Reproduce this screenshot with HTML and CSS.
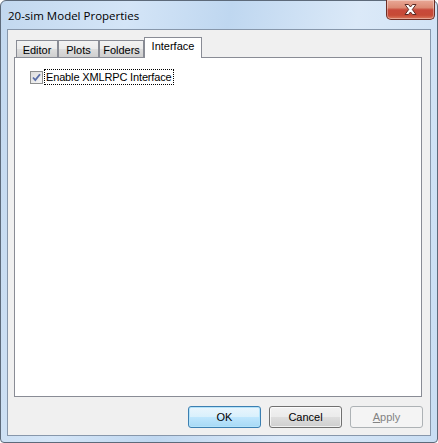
FILE: index.html
```html
<!DOCTYPE html>
<html>
<head>
<meta charset="utf-8">
<link rel="stylesheet" href="styles.css">
</head>
<body>
<div class="window">
  <div class="titlebar">
    <span class="title">20-sim Model Properties</span>
    <div class="close">
      <svg width="15" height="13" viewBox="0 0 15 13">
        <path d="M2 1.5 L5.5 1.5 L7.5 4 L9.5 1.5 L13 1.5 L9.3 6.5 L13 11.5 L9.5 11.5 L7.5 9 L5.5 11.5 L2 11.5 L5.7 6.5 Z" fill="#ffffff" stroke="#5a2a24" stroke-width="1" stroke-linejoin="round"/>
      </svg>
    </div>
  </div>
  <div class="client">
    <div class="tabctl">
      <div class="tabs">
        <div class="tab w-editor">Editor</div>
        <div class="tab w-plots">Plots</div>
        <div class="tab w-folders">Folders</div>
        <div class="tab active w-interface">Interface</div>
      </div>
      <div class="panel">
        <label class="check">
          <span class="box">
            <svg width="11" height="11" viewBox="0 0 11 11">
              <path d="M2 5.5 L4.3 8 L9 2.2" fill="none" stroke="#5a6ea8" stroke-width="1.8"/>
            </svg>
          </span>
          <span class="label">Enable XMLRPC Interface</span>
        </label>
      </div>
    </div>
    <div class="buttons">
      <button class="btn default">OK</button>
      <button class="btn">Cancel</button>
      <button class="btn disabled"><u>A</u>pply</button>
    </div>
  </div>
</div>
</body>
</html>
```

FILE: styles.css
```css
* { box-sizing: border-box; }
html, body { margin: 0; padding: 0; background: #ffffff; }
body { width: 438px; height: 443px; overflow: hidden; }

.window {
  width: 438px;
  height: 443px;
  border: 1px solid #5d6a7a;
  border-radius: 6px 6px 4px 4px;
  background: linear-gradient(100deg, #c2d8ef 0%, #d4e5f7 25%, #bfd7f0 45%, #dbe9f8 70%, #c8ddf3 100%);
  display: flex;
  flex-direction: column;
  font-family: "Liberation Sans", Arial, sans-serif;
  font-size: 11px;
  color: #000;
}

.titlebar {
  height: 28px;
  display: flex;
  align-items: flex-start;
  padding-left: 7px;
  padding-right: 2px;
}
.title {
  font-family: "Open Sans", "Noto Sans", sans-serif;
  font-size: 11.5px;
  line-height: 16px;
  margin-top: 7px;
  color: #000;
}
.close {
  margin-left: auto;
  width: 49px;
  height: 20px;
  margin-top: -1px;
  border: 1px solid #6e2e25;
  border-top: none;
  border-radius: 0 0 5px 5px;
  background: linear-gradient(#e9a897 0%, #dc8a74 40%, #c8493a 52%, #c64a36 80%, #dc7a5e 100%);
  box-shadow: inset 0 0 0 1px rgba(255,255,255,0.35);
  display: flex;
  align-items: center;
  justify-content: center;
}

.client {
  margin: 0 6px;
  height: 407px;
  border: 1px solid #8797ab;
  background: #f0f0f0;
  padding: 7px 6px 0 6px;
  display: flex;
  flex-direction: column;
}

.tabctl {
  width: 408px;
  height: 360px;
  display: flex;
  flex-direction: column;
}
.tabs {
  height: 20px;
  display: flex;
  align-items: flex-end;
  padding-left: 2px;
  position: relative;
  z-index: 1;
}
.tab {
  height: 17px;
  border: 1px solid #898c95;
  border-bottom: none;
  background: linear-gradient(#f2f2f2 0%, #ebebeb 50%, #dddddd 51%, #cfcfcf 100%);
  text-align: center;
  line-height: 16px;
  padding-top: 1px;
}
.tab.active {
  height: 21px;
  margin-bottom: -1px;
  background: #ffffff;
  line-height: 16px;
  padding-top: 0;
}
.w-editor { width: 42px; }
.w-plots { width: 41px; }
.w-folders { width: 45px; }
.w-interface { width: 58px; }

.panel {
  flex: 1;
  border: 1px solid #898c95;
  background: #ffffff;
  padding: 12px 0 0 15px;
}

.check {
  display: flex;
  align-items: center;
}
.box {
  width: 13px;
  height: 13px;
  border: 1px solid #8e8f8f;
  background: linear-gradient(135deg, #dcdcdc, #f6f6f6);
  display: flex;
  align-items: center;
  justify-content: center;
}
.label {
  margin-left: 2px;
  padding: 0 1px;
  outline: 1px dotted #000;
  outline-offset: 0;
  line-height: 14px;
  letter-spacing: -0.15px;
}

.buttons {
  margin-top: 9px;
  display: flex;
  justify-content: flex-end;
  gap: 8px;
  padding-right: 1px;
}
.btn {
  width: 73px;
  height: 22px;
  font-family: "Liberation Sans", Arial, sans-serif;
  font-size: 11px;
  color: #000;
  border: 1px solid #707070;
  border-radius: 3px;
  background: linear-gradient(#f2f2f2 0%, #ebebeb 48%, #dddddd 52%, #cfcfcf 100%);
  box-shadow: inset 0 0 0 1px rgba(255,255,255,0.7);
  padding: 0;
}
.btn.default {
  border-color: #3c7fb1;
  background: linear-gradient(#eaf6fd 0%, #d9f0fc 48%, #bee6fd 52%, #a7d9f5 100%);
  box-shadow: inset 0 0 0 1px #b3e3fa;
}
.btn.disabled {
  border-color: #adb2b5;
  background: #f4f4f4;
  color: #838383;
  box-shadow: none;
}
.btn u { text-decoration: underline; }
```
